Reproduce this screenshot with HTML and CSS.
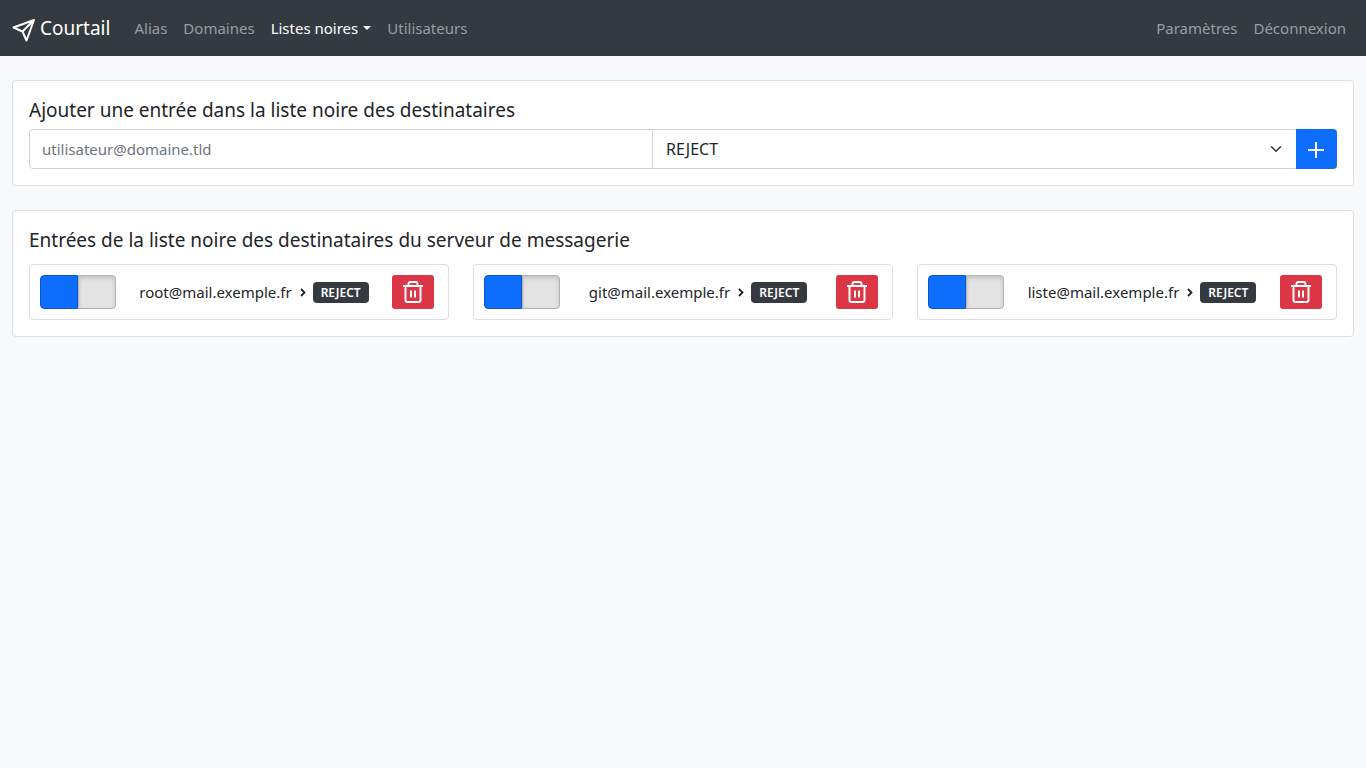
FILE: index.html
```html
<!DOCTYPE html>
<html lang="fr">
<head>
<meta charset="utf-8">
<meta name="viewport" content="width=device-width, initial-scale=1">
<title>Courtail</title>
<link rel="stylesheet" href="styles.css">
</head>
<body>
<svg class="sprite" aria-hidden="true">
  <symbol id="chevron" viewBox="0 0 16 16"><path d="M6 5l3.500 3.500L6 12" fill="none" stroke="currentColor" stroke-width="1.800"/></symbol>
  <symbol id="trash" viewBox="0 0 24 24"><path d="M2 6h20M7.500 6V4q0-2 2-2h5q2 0 2 2v2M4.500 6v14q0 2 2 2h11q2 0 2-2V6M10 10.500v7M14 10.500v7" fill="none" stroke="currentColor" stroke-width="2"/></symbol>
</svg>
<nav class="navbar">
  <a class="brand" href="#">
    <svg class="brand-icon" viewBox="0 0 24 24" aria-hidden="true"><path d="M22 2L1.500 9.500L10.500 13.500L14.500 22.500zM22 2L10.500 13.500" fill="none" stroke="currentColor" stroke-width="2" stroke-linejoin="round"/></svg>
    <span>Courtail</span>
  </a>
  <ul class="nav">
    <li><a class="nav-link" href="#">Alias</a></li>
    <li><a class="nav-link" href="#">Domaines</a></li>
    <li><a class="nav-link dropdown active" href="#">Listes noires</a></li>
    <li><a class="nav-link" href="#">Utilisateurs</a></li>
  </ul>
  <ul class="nav nav-end">
    <li><a class="nav-link" href="#">Paramètres</a></li>
    <li><a class="nav-link" href="#">Déconnexion</a></li>
  </ul>
</nav>
<main class="container">
  <section class="card">
    <h1 class="title">Ajouter une entrée dans la liste noire des destinataires</h1>
    <form class="input-group">
      <input class="field" type="text" placeholder="utilisateur@domaine.tld" aria-label="Adresse du destinataire">
      <div class="select-wrap">
        <select class="select" aria-label="Action"><option>REJECT</option></select>
        <svg class="select-arrow" viewBox="0 0 16 16" aria-hidden="true"><path d="M2 5l6 6 6-6" fill="none" stroke="currentColor" stroke-width="2" stroke-linecap="round" stroke-linejoin="round"/></svg>
      </div>
      <button class="add" type="button" aria-label="Ajouter"><svg class="icon" viewBox="0 0 24 24" aria-hidden="true"><path d="M12 4v16M4 12h16" fill="none" stroke="currentColor" stroke-width="2"/></svg></button>
    </form>
  </section>
  <section class="card">
    <h2 class="title">Entrées de la liste noire des destinataires du serveur de messagerie</h2>
    <div class="entries">
      <article class="entry">
        <input class="toggle" type="checkbox" checked aria-label="Activer root@mail.exemple.fr">
        <div class="rule"><span>root@mail.exemple.fr</span><svg class="chevron" aria-hidden="true"><use href="#chevron"/></svg><span class="badge">REJECT</span></div>
        <button class="delete" type="button" aria-label="Supprimer root@mail.exemple.fr"><svg class="icon" aria-hidden="true"><use href="#trash"/></svg></button>
      </article>
      <article class="entry">
        <input class="toggle" type="checkbox" checked aria-label="Activer git@mail.exemple.fr">
        <div class="rule"><span>git@mail.exemple.fr</span><svg class="chevron" aria-hidden="true"><use href="#chevron"/></svg><span class="badge">REJECT</span></div>
        <button class="delete" type="button" aria-label="Supprimer git@mail.exemple.fr"><svg class="icon" aria-hidden="true"><use href="#trash"/></svg></button>
      </article>
      <article class="entry">
        <input class="toggle" type="checkbox" checked aria-label="Activer liste@mail.exemple.fr">
        <div class="rule"><span>liste@mail.exemple.fr</span><svg class="chevron" aria-hidden="true"><use href="#chevron"/></svg><span class="badge">REJECT</span></div>
        <button class="delete" type="button" aria-label="Supprimer liste@mail.exemple.fr"><svg class="icon" aria-hidden="true"><use href="#trash"/></svg></button>
      </article>
    </div>
  </section>
</main>
</body>
</html>
```
FILE: styles.css
```css
*, *::before, *::after { box-sizing: border-box; }
body {
  margin: 0;
  background: #f8f9fa;
  color: #212529;
  font: 15px/24px "Noto Sans", "Open Sans", sans-serif;
}
input, select, button { font: inherit; color: inherit; margin: 0; }
.sprite { display: none; }
.icon { display: block; width: 24px; height: 24px; }

.navbar {
  display: flex;
  align-items: center;
  min-height: 56px;
  padding: 8px 12px;
  background: #343a40;
}
.brand {
  display: flex;
  align-items: center;
  gap: 4px;
  margin-right: 16px;
  color: #fff;
  font-size: 19px;
  line-height: 32px;
  text-decoration: none;
}
.brand-icon { width: 24px; height: 24px; margin-top: 4px; }
.nav { display: flex; margin: 0; padding: 0; list-style: none; }
.nav-end { margin-left: auto; }
.nav-link {
  display: block;
  padding: 8px;
  color: #999da0;
  text-decoration: none;
}
.nav-link.active { color: #fff; }
.dropdown::after {
  content: "";
  display: inline-block;
  margin-left: 5px;
  vertical-align: 4px;
  border: 4px solid transparent;
  border-top-color: currentColor;
  border-bottom: 0;
}

.container { display: grid; gap: 24px; padding: 24px 12px; }
.card {
  padding: 16px;
  background: #fff;
  border: 1px solid #dfdfdf;
  border-radius: 4px;
}
.title {
  margin: 0 0 8px;
  font-size: 19px;
  font-weight: 400;
  line-height: 24px;
}

.input-group { display: flex; height: 40px; }
.field, .select {
  height: 40px;
  padding: 0 12px;
  border: 1px solid #ced4da;
  background: #fff;
  outline: 0;
}
.field { flex: 1; min-width: 0; border-radius: 4px 0 0 4px; }
.field::placeholder { color: #6c757d; opacity: 1; }
.select-wrap { position: relative; flex: 1 1 46px; margin-left: -1px; }
.select { width: 100%; padding-left: 13px; border-right: 0; border-radius: 0; font-size: 16px; appearance: none; }
.select-arrow {
  position: absolute;
  top: 14px;
  right: 14px;
  width: 12px;
  height: 12px;
  color: #343a40;
  pointer-events: none;
}
.add {
  padding: 9px 9px 7px 8px;
  border: 0;
  border-radius: 0 4px 4px 0;
  background: #0d6efd;
  color: #fff;
}

.entries {
  display: grid;
  grid-template-columns: repeat(3, 1fr);
  gap: 24px;
  padding-top: 5px;
}
.card { padding-top: 17px; padding-bottom: 16px; }
.title { margin-bottom: 7px; }
.entry {
  display: flex;
  align-items: center;
  padding: 10px 14px 10px 10px;
  border: 1px solid #dfdfdf;
  border-radius: 4px;
}
.toggle {
  appearance: none;
  display: flex;
  width: 76px;
  height: 34px;
  border-radius: 4px;
  background: #e3e3e3;
  overflow: hidden;
}
.toggle::before, .toggle::after { content: ""; width: 50%; }
.toggle:checked::before {
  border: 1px solid #0a58ca;
  border-radius: 4px 0 0 4px;
  background: #0d6efd;
}
.toggle::after {
  border: 1px solid #b3b3b3;
  border-radius: 0 4px 4px 0;
  box-shadow: inset 0 2px 4px rgb(0 0 0 / 15%);
}
.rule { display: flex; flex: 1; align-items: center; justify-content: center; white-space: nowrap; }
.chevron { width: 16px; height: 16px; margin: 0 2px 0 3px; }
.badge {
  margin-top: 1px;
  padding: 4px 8px;
  border-radius: 4px;
  background: #343a40;
  color: #fff;
  font-size: 12px;
  font-weight: 600;
  line-height: 13px;
}
.delete {
  padding: 5px 9px;
  border: 0;
  border-radius: 3px;
  background: #dc3545;
  color: #fff;
}
```
